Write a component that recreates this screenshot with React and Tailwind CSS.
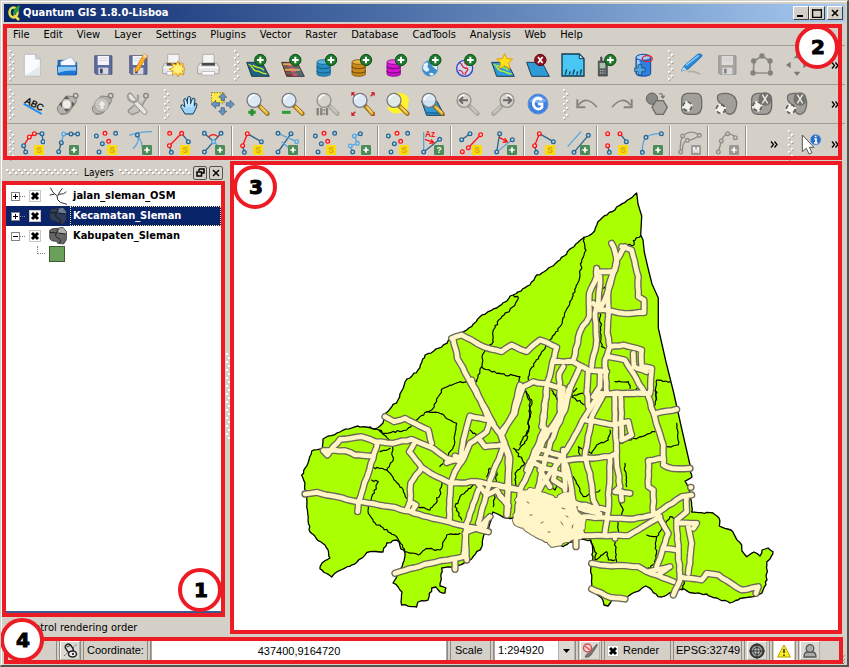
import React from "react";

const UI = "font-['DejaVu_Sans_Condensed','DejaVu_Sans',sans-serif]";

/* ---------- small shared pieces ---------- */

function Grip({ className = "w-[15px]" }) {
  return (
    <div className={`flex h-full shrink-0 items-center justify-end ${className}`}>
      <svg width="6" height="31" aria-hidden="true">
        {[0, 7, 14, 21, 28].map((y) => (
          <g key={y}>
            <rect x="0" y={y} width="2" height="2" fill="#fff" />
            <path d={`M2 ${y + 1}v1.5h-1`} stroke="#a5a199" fill="none" />
          </g>
        ))}
        {[3, 10, 17, 24].map((y) => (
          <g key={y}>
            <rect x="3" y={y + 1} width="2" height="2" fill="#fff" />
            <path d={`M5 ${y + 2}v1.5h-1`} stroke="#a5a199" fill="none" />
          </g>
        ))}
      </svg>
    </div>
  );
}

function DotRow({ width }) {
  const n = Math.floor(width / 6);
  return (
    <svg width={width} height="7" aria-hidden="true">
      {Array.from({ length: n }, (_, i) => (
        <g key={i}>
          <rect x={i * 6} y="0" width="2" height="2" fill="#fff" />
          <rect x={i * 6 + 1} y="2" width="2" height="1" fill="#a5a199" />
          <rect x={i * 6 + 3} y="3" width="2" height="2" fill="#fff" />
          <rect x={i * 6 + 4} y="5" width="2" height="1" fill="#a5a199" />
        </g>
      ))}
    </svg>
  );
}

function Tool({ label, h = 24, children }) {
  return (
    <button type="button" aria-label={label} className="flex w-[35px] shrink-0 justify-center">
      <svg width="24" height={h} viewBox={`0 0 72 ${h * 3}`} aria-hidden="true">
        {children}
      </svg>
    </button>
  );
}

function More({ className = "w-5" }) {
  return (
    <button type="button" aria-label="More tools" className={`shrink-0 text-center ${className}`}>
      <svg width="8" height="7" viewBox="0 0 8 7" className="inline" aria-hidden="true">
        <path d="M1 .5l2.5 3L1 6.500M4.500 .5l2.500 3-2.500 3" fill="none" stroke="#000" strokeWidth="1.300" />
      </svg>
    </button>
  );
}

const Sep = () => <div className="-mt-1 h-8 w-[3px] shrink-0 border-l border-[#96928a] shadow-[inset_1px_0_#fff]" />;

function Callout({ n, className }) {
  return (
    <div
      className={`pointer-events-none absolute z-20 flex size-11 items-center justify-center rounded-full border-4 border-[#ed1c24] bg-white pl-0.5 font-['DejaVu_Sans',sans-serif] text-xl font-bold text-black [-webkit-text-stroke:1px_#000] ${className}`}
    >
      {n}
    </div>
  );
}

function Frame({ className }) {
  return <div className={`pointer-events-none absolute z-10 border-4 border-[#ed1c24] ${className}`} />;
}

/* ---------- icon parts ---------- */

const Plus = ({ x = 43, y = 21 }) => (
  <g>
    <circle cx={x} cy={y} r="17" fill="#1d7a2b" stroke="#0f4f1a" strokeWidth="3" />
    <path d={`M${x - 10} ${y}h20M${x} ${y - 10}v20`} stroke="#fff" strokeWidth="6" />
  </g>
);

const Db = ({ c, d, l }) => (
  <g stroke={d} strokeWidth="2.500">
    <path d="M3 28v35c0 9 40 9 40 0V28z" fill={c} />
    <path d="M3 40c0 9 40 9 40 0M3 53c0 9 40 9 40 0" fill="none" strokeWidth="4" />
    <ellipse cx="23" cy="27" rx="20" ry="7" fill={l} />
  </g>
);

const Floppy = ({ c = "#5d6d9e", d = "#3c4468", l = "#f4f4fa" }) => (
  <g>
    <path d="M11 8h52v56H15l-4-4z" fill={c} stroke={d} strokeWidth="2" />
    <rect x="20" y="9" width="34" height="27" fill={l} />
    <path d="M24 16h26M24 23h26" stroke="#c8c8d0" strokeWidth="2" />
    <rect x="22" y="44" width="30" height="20" fill="#d8d8dc" />
    <rect x="27" y="47" width="8" height="14" fill={d} />
  </g>
);

const Printer = () => (
  <g>
    <path d="M20 4h34v30H20z" fill="#f4f4f4" stroke="#9a9a9a" strokeWidth="2" />
    <path d="M12 30h50l7 12v20H5V42z" fill="#e6e6e6" stroke="#8c8c8c" strokeWidth="2" />
    <path d="M7 44h60" stroke="#fff" strokeWidth="3" />
    <rect x="17" y="30" width="40" height="8" fill="#4a4a4a" />
    <rect x="18" y="56" width="38" height="10" fill="#fff" stroke="#aaa" strokeWidth="2" />
  </g>
);

const Lens = ({ gray, x = 24, y = 25, flip }) => {
  const g = (
    <g>
      <path d={`M${x + 16} ${y + 17}L64 65`} stroke={gray ? "#a3a19c" : "#8a6a1c"} strokeWidth="13" strokeLinecap="round" />
      <path d={`M${x + 20} ${y + 20}L63 64`} stroke={gray ? "#bfbcb6" : "#f0b93c"} strokeWidth="8" strokeLinecap="round" />
      <path d={`M${x + 23} ${y + 21}L63 61`} stroke={gray ? "#dad7d1" : "#ffe79a"} strokeWidth="3" />
      <circle cx={x} cy={y} r="21" fill={gray ? "#d6d3cc" : "#dce9f7"} fillOpacity={gray ? 1 : 0.92} stroke={gray ? "#93918c" : "#77797e"} strokeWidth="4" />
      <path d={`M${x - 14} ${y - 2}q2-13 16-14`} stroke="#fff" strokeWidth="5" fill="none" />
    </g>
  );
  return flip ? <g transform="translate(72 0) scale(-1 1)">{g}</g> : g;
};

const Sheet = ({ fill = "#2e9bd6", children }) => (
  <g>
    <path d="M2 28h46l22 42H17z" fill={fill} stroke="#1d3d4f" strokeWidth="3" />
    {children}
  </g>
);

const Star = ({ x, y, s = 1, c = "#ffe11f" }) => (
  <path
    transform={`translate(${x} ${y}) scale(${s})`}
    d="M0-24l7 15 17 1-12 12 4 18-16-10-16 10 4-18-12-12 17-1z"
    fill={c}
    stroke="#e0a000"
    strokeWidth="3"
  />
);

const Burst = () => (
  <path
    d="M51 24l5 13 11-6-3 12 9 5-9 5 4 13-12-6-5 11-6-11-12 6 4-12-12-6 12-5-5-13 13 6z"
    fill="#fff27a"
    stroke="#f09a00"
    strokeWidth="3"
  />
);

const B = "#2a6590";
const L = "#5aa6dc";
const R = "#ff1212";
const G = "#8f8d88";

const Dot = ({ p, c = B }) => (
  <circle cx={p[0]} cy={p[1]} r="5.500" fill={c === R ? "#ffe1dc" : c === G ? "#d4d0c8" : "#b8dcf2"} stroke={c} strokeWidth="4" />
);

function Badge({ k, gray }) {
  const fill = gray ? "#9a9893" : k === "S" ? "#fddc08" : "#4d8c57";
  return (
    <g>
      <rect x="39" y="45" width="30" height="30" rx="4" fill={fill} />
      {k === "+" ? (
        <path d="M46 60h16M54 52v16" stroke="#fff" strokeWidth="5" />
      ) : (
        <text x="54" y="69" textAnchor="middle" fontFamily="Liberation Sans, sans-serif" fontWeight="bold" fontSize="25" fill={k === "S" ? "#c9a227" : "#fff"}>
          {k}
        </text>
      )}
    </g>
  );
}

function Cad({ label, lines = [], dots = [], k, gray, children }) {
  return (
    <Tool label={label} h={26}>
      {lines.map(([d, c], i) => (
        <path key={i} d={d} stroke={c} strokeWidth="4" fill="none" />
      ))}
      {children}
      {dots.map(([x, y, c], i) => (
        <Dot key={i} p={[x, y]} c={c} />
      ))}
      <Badge k={k} gray={gray} />
    </Tool>
  );
}

const scatter = [[7, 18, B], [33, 10, R], [65, 10, B], [25, 41, B], [44, 34, R], [15, 66, B]];
const bend = {
  lines: [["M22 11L8 47", R], ["M22 11L64 35M8 47l5 20", B]],
  dots: [[22, 11, R], [8, 47, R], [64, 35, B], [13, 67, B]],
};

/* ---------- tool bars ---------- */

function FileToolbar() {
  return (
    <div className="flex h-[39px] items-center border-b border-[#a19d95]">
      <Grip className="w-[11px]" />
      <Tool label="New project">
        <path d="M10 4h34l14 14v51H10z" fill="#fafbfd" stroke="#a7adb5" strokeWidth="2" />
        <path d="M44 4v14h14z" fill="#d5dae2" stroke="#a7adb5" strokeWidth="2" />
        <path d="M14 66h42V40z" fill="#e4e9f0" />
      </Tool>
      <Tool label="Open project">
        <path d="M6 22h20l6 6h30v36H6z" fill="#1e6fc4" stroke="#0f4f9a" strokeWidth="2" />
        <path d="M14 26L44 12l14 16v14H14z" fill="#f6f9fd" stroke="#8fa5bd" strokeWidth="2" />
        <path d="M4 38h58l-2 28H6z" fill="#1e78d4" stroke="#0f4f9a" strokeWidth="2" />
        <path d="M6 41h54v12q-26-2-54 6z" fill="#8cc6f6" />
      </Tool>
      <Tool label="Save project"><Floppy /></Tool>
      <Tool label="Save project as">
        <Floppy />
        <path d="M54 3l10 5-27 45-10 5 1-12z" fill="#ffae22" stroke="#b86e00" strokeWidth="2" />
        <path d="M54 3l10 5-4 8-10-6z" fill="#f6d7b0" />
      </Tool>
      <Tool label="New print composer"><Printer /><Burst /></Tool>
      <Tool label="Composer manager"><Printer /></Tool>
      <Grip />
      <Tool label="Add vector layer">
        <Sheet fill="#1c6480"><path d="M8 34c12 2 10 20 24 20s14 10 30 8M20 36c12 12 26 4 34 16" stroke="#d5e02c" strokeWidth="4" fill="none" /></Sheet>
        <Plus />
      </Tool>
      <Tool label="Add raster layer">
        <path d="M2 28h46l22 42H17z" fill="#3f6f86" />
        <path d="M2 28h14l21 42H17z" fill="#7d4038" />
        <path d="M16 28h14l22 42H37z" fill="#d85078" />
        <path d="M4 34h46M11 50h48" stroke="#d8a95c" strokeWidth="6" />
        <path d="M8 42h46M14 60h50" stroke="#6d6458" strokeWidth="4" />
        <path d="M2 28h46l22 42H17z" fill="none" stroke="#4a3530" strokeWidth="3" />
        <Plus />
      </Tool>
      <Tool label="Add PostGIS layer"><Db c="#2b8cc4" d="#17648f" l="#5cb4e2" /><Plus x={45} /></Tool>
      <Tool label="Add SpatiaLite layer"><Db c="#c98a1a" d="#7d5208" l="#e8b14a" /><Plus x={45} /></Tool>
      <Tool label="Add MSSQL layer"><Db c="#d713d0" d="#7a0a80" l="#f04be8" /><Plus x={45} /></Tool>
      <Tool label="Add WMS layer">
        <circle cx="27" cy="46" r="24" fill="#3f8dc8" stroke="#7faed2" strokeWidth="2" />
        <path d="M8 34c10-10 16-4 12 4s8 6 4 14-14 4-18-6zM32 28c8 0 16 8 17 18s-8 0-12-4-8-8-5-14zM24 62c6-6 14-2 14 2s-8 6-14-2z" fill="#e6f3fb" />
        <Plus />
      </Tool>
      <Tool label="Add WFS layer">
        <circle cx="26" cy="46" r="24" fill="#cfd7ee" stroke="#2b45c8" strokeWidth="4" />
        <path d="M12 30c8 4 4 10 12 14s14-2 10 8-8 4-6 14M28 26c-6 8 8 6 4 12M8 52c10 0 12 4 14 12" fill="none" stroke="#e02030" strokeWidth="4" />
        <Plus />
      </Tool>
      <Tool label="New shapefile layer">
        <Sheet><path d="M8 34c12 2 10 20 24 20s14 10 30 8M18 36c12 12 26 4 34 16" stroke="#b9ee3c" strokeWidth="4" fill="none" /></Sheet>
        <Star x={41} y={26} />
      </Tool>
      <Tool label="Remove layer">
        <Sheet />
        <circle cx="43" cy="21" r="17" fill="#8c1420" stroke="#5c0a12" strokeWidth="3" />
        <path d="M36 12l14 18M50 12L36 30" stroke="#fff" strokeWidth="5" />
      </Tool>
      <Tool label="Create GPX layer">
        <path d="M3 3h52l14 14v52H3z" fill="#48c6f4" stroke="#123a50" strokeWidth="4" />
        <path d="M55 3v14h14z" fill="#c5eefb" stroke="#123a50" strokeWidth="3" />
        <path d="M13 65l4-16M25 65l3-10M36 65l4-16M47 65l3-10M58 65l3-16" stroke="#123a50" strokeWidth="4" />
      </Tool>
      <Tool label="GPS tools">
        <path d="M7 24h7V12h4v12h16v45H7z" fill="#565b5e" stroke="#33383b" strokeWidth="2" />
        <rect x="11" y="30" width="17" height="16" fill="#a9c2a8" />
        <path d="M12 53h16M12 60h16" stroke="#ccc" strokeWidth="3" strokeDasharray="4 3" />
        <Plus />
      </Tool>
      <Tool label="Database manager">
        <path d="M15 14v48c0 10 44 10 44 0V14z" fill="#2f7fe0" stroke="#12459a" strokeWidth="3" />
        <path d="M22 20v44" stroke="#a5d2ff" strokeWidth="8" />
        <ellipse cx="37" cy="13" rx="22" ry="9" fill="#9fd0ff" stroke="#12459a" strokeWidth="3" />
        <ellipse cx="49" cy="17" rx="15" ry="9" fill="none" stroke="#f01828" strokeWidth="4" />
        <path d="M21 35h11v10h10v11H32v10H21V56H11V45h10z" fill="#4ea6dc" stroke="#103c66" strokeWidth="2" />
      </Tool>
      <Grip className="w-[14px]" />
      <Tool label="Toggle editing">
        <path d="M22 56q22-4 38 8" stroke="#b2aea6" strokeWidth="5" fill="none" />
        <path d="M4 54l10-17L54 3q10-3 13 6L25 48z" fill="#2588dc" stroke="#145c9e" strokeWidth="2" />
        <path d="M18 37L56 7" stroke="#85c6f8" strokeWidth="5" />
        <path d="M4 54l8-12 7 8z" fill="#c9dff0" />
      </Tool>
      <Tool label="Save edits"><Floppy c="#a8a6a1" d="#85837e" l="#dddbd6" /></Tool>
      <Tool label="Add feature">
        <path d="M36 9L59 24l2 36H10l2-36z" fill="none" stroke={G} strokeWidth="5" />
        {[[36, 9], [11, 24], [60, 24], [9, 60], [61, 60]].map(([x, y]) => (
          <circle key={x} cx={x} cy={y} r="8" fill="#85837e" />
        ))}
      </Tool>
      <Tool label="Move feature">
        <path d="M36 3l10 13H26zM36 69l10-13H26zM3 36l14-10v20zM69 36L55 26v20z" fill="#7c7a76" />
      </Tool>
      <div className="flex-1" />
      <More />
    </div>
  );
}

const Tag = () => (
  <g>
    <path d="M4 46L30 12l26 2 6 12-24 34-20 8q-14-4-14-22z" fill="#b5b3ae" stroke="#85837e" strokeWidth="3" />
    <circle cx="59" cy="11" r="7" fill="none" stroke="#85837e" strokeWidth="4" />
    <path d="M14 64q14 6 24-4l22-30" stroke="#92908b" strokeWidth="4" fill="none" />
  </g>
);

const Ring = ({ x, y }) => (
  <g>
    <circle cx={x} cy={y} r="11" fill="#f4f2ec" />
    <circle cx={x} cy={y} r="13" fill="none" stroke="#63615d" strokeWidth="5" strokeDasharray="13 7" />
    <circle cx={x} cy={y} r="13" fill="none" stroke="#f4f2ec" strokeWidth="6" strokeDasharray="7 13" strokeDashoffset="-13" />
  </g>
);
const blob = (
  <path d="M22 4h28q15 2 15 20v22q-2 18-18 21H24Q6 66 5 50V22Q6 6 22 4z" fill="#a19f9a" stroke="#6d6b67" strokeWidth="4" />
);
const bean = (
  <path d="M8 12Q12 3 32 4q33 2 33 32-2 28-20 31-14-1-15-17 0-10-14-16Q5 24 8 12z" fill="#a19f9a" stroke="#6d6b67" strokeWidth="4" />
);
const erase = (
  <g>
    <circle cx="45" cy="21" r="20" fill="#74726e" />
    <path d="M37 8l16 26M53 8L37 34" stroke="#f0eee9" strokeWidth="4" />
  </g>
);

function NavToolbar() {
  return (
    <div className="flex h-[39px] items-center border-b border-[#a19d95]">
      <Grip className="w-[11px]" />
      <Tool label="Labeling">
        <text x="10" y="32" transform="rotate(27 10 32)" fontFamily="Liberation Sans, sans-serif" fontSize="28" fill="#000" stroke="#000">ABC</text>
        <path d="M8 35l54 31" stroke="#1c8af4" strokeWidth="6" />
      </Tool>
      <Tool label="Move label">
        <Tag />
        <path d="M32 12l9 9H23zM32 60l9-9H23zM9 37l9-9v18zM56 37l-9-9v18z" fill="#5f5d59" />
        <circle cx="32" cy="37" r="12" fill="#efede8" />
      </Tool>
      <Tool label="Rotate label">
        <Tag />
        <circle cx="32" cy="38" r="21" fill="#c9c7c1" stroke="#a3a19c" strokeWidth="3" />
        <path d="M33 24l14 16h-8v12H27V40h-8z" fill="#efede8" stroke="#b0aea9" strokeWidth="2" />
      </Tool>
      <Tool label="Change label">
        <circle cx="60" cy="11" r="7" fill="none" stroke="#85837e" strokeWidth="4" />
        <path d="M60 20L38 60l-20 8q-10-4-12-12l18-16" fill="#c4c2bc" stroke="#92908b" strokeWidth="4" />
        <path d="M12 10l18 22 26 28" stroke="#92908b" strokeWidth="16" strokeLinecap="round" />
        <path d="M12 12l18 20 26 28" stroke="#e8e6e0" strokeWidth="11" strokeLinecap="round" />
        <path d="M5 10q0 20 20 20 16-4 10-22" stroke="#a3a19c" strokeWidth="7" fill="none" />
      </Tool>
      <Grip />
      <Tool label="Pan map">
        <path d="M27 66L15 46q-2-9 5-8l7 7-4-22q4-8 9 0l2 12 1-19q5-6 9 0v19l5-15q7-4 8 2l-2 20 3-7q5-3 5 3-2 14-12 28z" fill="#9bd3f6" stroke="#163c58" strokeWidth="3" />
        <path d="M29 27l3 20M39 20v24M50 26l-3 20" stroke="#dff3ff" strokeWidth="4" />
      </Tool>
      <Tool label="Pan to selection">
        <rect x="1" y="2" width="38" height="31" fill="#ffe94a" stroke="#77681a" strokeWidth="3" strokeDasharray="4 4" />
        <path d="M35 3l12 13h-7v10H30V16h-7zM35 70l12-13h-7V47H30v10h-7zM1 37l13-12v7h11v10H14v7zM70 37L57 25v7H46v10h11v7z" fill="#6b94bd" stroke="#34587c" strokeWidth="2" />
      </Tool>
      <Tool label="Zoom in"><Lens /><path d="M7 61h22M18 51v20" stroke="#2a8f2f" strokeWidth="9" /></Tool>
      <Tool label="Zoom out"><Lens /><path d="M3 61h26" stroke="#2a9f35" strokeWidth="9" /></Tool>
      <Tool label="Zoom to native resolution"><Lens gray /><path d="M5 48v22M16 48v22M33 48v22" stroke="#83817c" strokeWidth="7" /><path d="M25 52v5m0 6v5" stroke="#83817c" strokeWidth="5" /></Tool>
      <Tool label="Zoom full">
        <path d="M3 3l10 10M69 3L59 13M3 69l10-10M69 69L59 59" stroke="#d01822" strokeWidth="4" />
        <path d="M1 1h12L1 13zM71 1H59l12 12zM1 71h12L1 59zM71 71H59l12-12z" fill="#d01822" />
        <Lens x={27} />
      </Tool>
      <Tool label="Zoom to selection"><path d="M10 16Q30-6 60 8q14 10 6 28 2 20-20 26-26 8-40-10z" fill="#fff22e" /><Lens /></Tool>
      <Tool label="Zoom to layer"><Sheet><path d="M12 62l50 2" stroke="#1d6fa8" strokeWidth="5" /></Sheet><Lens /></Tool>
      <Tool label="Zoom last"><Lens gray /><path d="M12 25h24M21 15L11 25l10 10" stroke="#6b6965" strokeWidth="6" fill="none" /></Tool>
      <Tool label="Zoom next"><Lens gray flip /><path d="M36 25h24M51 15l10 10-10 10" stroke="#6b6965" strokeWidth="6" fill="none" /></Tool>
      <Tool label="Refresh">
        <circle cx="36" cy="36" r="30" fill="#3f80e0" stroke="#5f8fd8" strokeWidth="3" />
        <path d="M10 28q26-34 52 0-26 12-52 0z" fill="#78adf2" />
        <path d="M48 24q-12-10-22-1-9 12 1 24 11 9 21-1V36H36" stroke="#fff" strokeWidth="8" fill="none" />
      </Tool>
      <Grip className="w-[14px]" />
      <Tool label="Undo"><path d="M10 40q24-32 56 6" fill="none" stroke="#85837e" strokeWidth="5" /><path d="M7 22v24h24" fill="none" stroke="#85837e" strokeWidth="6" /></Tool>
      <Tool label="Redo"><path d="M62 40Q38 8 6 46" fill="none" stroke="#85837e" strokeWidth="5" /><path d="M65 22v24H41" fill="none" stroke="#85837e" strokeWidth="6" /></Tool>
      <Tool label="Simplify feature">
        <circle cx="21" cy="20" r="17" fill="#8b8985" stroke="#63615d" strokeWidth="3" />
        <path d="M33 26h22l12 20-12 21H33L21 46z" fill="#a9a7a2" stroke="#6d6b67" strokeWidth="4" />
        <path d="M42 6q10-4 12 8m-6-2l6 6 5-7" fill="none" stroke="#7c7a76" strokeWidth="4" />
      </Tool>
      <Tool label="Add ring">{blob}<Ring x={22} y={43} /></Tool>
      <Tool label="Add part">{bean}<Ring x={17} y={51} /></Tool>
      <Tool label="Delete ring">{blob}<Ring x={22} y={43} />{erase}</Tool>
      <Tool label="Delete part">{bean}<Ring x={17} y={51} />{erase}</Tool>
      <div className="flex-1" />
      <More />
    </div>
  );
}

function CadToolbar() {
  return (
    <div className="flex h-9 items-start pt-1.5">
      <div className="-mt-0.5 h-[34px]"><Grip className="w-[11px]" /></div>
      <Cad label="Select arc" k="S" lines={[["M8 47L25 21L40 11", R], ["M14 66L8 47M40 11H63L66 35", B]]} dots={[[8, 47, B], [14, 66, B], [25, 21, R], [40, 11, R], [63, 11, B], [66, 35, B]]} />
      <Cad label="Add arc" k="+" lines={[["M8 65L16 38", B], ["M16 38L23 12", L], ["M23 12H65", B]]} dots={[[8, 65, B], [16, 38, B], [23, 12, L], [45, 12, B], [65, 12, B]]} />
      <Sep />
      <Cad label="Select points" k="S" dots={scatter} />
      <Cad label="Tangent point" k="+" lines={[["M1 16Q25 6 69 5M12 56Q34 36 25 16Q40 34 40 56", L]]} dots={[[25, 15, B]]} />
      <Sep />
      <Cad label="Select three points" k="S" lines={[["M7 47L44 10", R], ["M44 10L64 35M7 47l6 20", B]]} dots={[[8, 10, R], [44, 10, R], [7, 47, R], [64, 35, B], [13, 67, B]]} />
      <Cad label="Bisect angle" k="+" lines={[["M7 10L35 35L57 10M35 35L7 66", B], ["M35 35L57 56", L], ["M20 20Q34 8 48 20", R]]} dots={[[7, 10, B], [57, 10, B], [35, 35, L], [7, 66, B]]} />
      <Sep />
      <Cad label="Select two segments" k="S" {...bend} />
      <Cad label="Intersect segments" k="+" lines={[["M48 11L9 66", B], ["M9 10L65 35M20 35l28 24", L]]} dots={[[9, 10, B], [48, 11, B], [65, 35, L], [9, 66, B]]} />
      <Sep />
      <Cad label="Select vertices" k="S" dots={scatter} />
      <Cad label="Add polyline" k="+" lines={[["M37 11L19 18L28 40L7 48L14 66", L]]} dots={[[37, 11, B], [19, 18, L], [28, 40, L], [7, 48, L], [14, 66, B]]} />
      <Sep />
      <Cad label="Select azimuth points" k="S" dots={scatter} />
      <Cad label="Azimuth" k="?" lines={[["M8 66V6", L], ["M8 66L56 28", B], ["M12 28L38 38M30 28l8 10-13 2", R]]} dots={[[56, 28, B], [8, 66, B]]}>
        <text x="12" y="22" fontFamily="Liberation Sans, sans-serif" fontWeight="bold" fontSize="25" fill={R}>Az</text>
      </Cad>
      <Sep />
      <Cad label="Select segment" k="S" lines={[["M8 29L33 11", B], ["M28 53L65 14", R]]} dots={[[33, 11, B], [8, 29, B], [65, 14, R], [28, 53, R], [10, 65, R]]} />
      <Cad label="Rotate segment" k="+" lines={[["M17 11L8 66", B], ["M8 66L55 29", L], ["M16 22L40 36M32 24l8 12-14 1", R]]} dots={[[17, 11, B], [55, 29, B], [8, 66, B]]} />
      <Sep />
      <Cad label="Select parallel" k="S" {...bend} />
      <Cad label="Add parallel" k="+" lines={[["M2 50L42 5", L], ["M21 67L64 16", B]]} dots={[[64, 16, B], [21, 67, B]]} />
      <Sep />
      <Cad label="Select line ends" k="S" lines={[["M45 11L64 35M8 47l5 20", B]]} dots={[[8, 11, R], [45, 11, R], [64, 35, B], [8, 47, R], [13, 67, B]]} />
      <Cad label="Add curve" k="+" lines={[["M7 67Q6 36 18 22Q34 10 64 11", L]]} dots={[[7, 67, B], [18, 22, B], [64, 11, B]]} />
      <Sep />
      <Cad label="Modify curve" k="M" gray lines={[["M8 66Q4 36 14 18Q40-4 64 16M14 60Q12 36 28 31Q48 30 64 16", G]]} dots={[[8, 66, G], [14, 18, G], [28, 31, G], [64, 16, G]]} />
      <Sep />
      <Cad label="Append curve" k="+" gray lines={[["M7 66L16 33Q22 16 35 11Q50 12 58 23", G]]} dots={[[7, 66, G], [16, 33, G], [35, 11, G], [58, 23, G]]} />
      <Sep />
      <div className="flex h-[27px] flex-1 items-center justify-end"><More className="w-4" /></div>
      <div className="-mt-0.5 h-[34px]"><Grip className="w-3" /></div>
      <Tool label="Identify features" h={26}>
        <path d="M7 15v50l12-10 8 17 9-4-8-16h14z" fill="#fff" stroke="#55534f" strokeWidth="3" />
        <circle cx="47" cy="29" r="16" fill="#2d6fc4" stroke="#8fb6e4" strokeWidth="2" />
        <path d="M47 17v5M43 27h5v11m-6 1h11" stroke="#fff" strokeWidth="5" fill="none" />
      </Tool>
      <div className="flex h-[27px] w-4 shrink-0 items-center"><More className="w-3" /></div>
    </div>
  );
}

/* ---------- layer panel ---------- */

const Tick = ({ className = "" }) => (
  <svg viewBox="0 0 12 12" className={`pointer-events-none col-start-1 row-start-1 size-3 ${className}`} aria-hidden="true">
    <path d="M3 3l6 6M9 3L3 9" stroke="#000" strokeWidth="3" />
  </svg>
);

function Check({ id, label }) {
  return (
    <span className="grid size-3 shrink-0 place-items-center">
      <input id={id} type="checkbox" defaultChecked aria-label={label} className="col-start-1 row-start-1 size-3 appearance-none border border-[#c9c6bf] bg-white" />
      <Tick />
    </span>
  );
}

const PolyIcon = ({ dark }) => (
  <svg width="18" height="18" viewBox="0 0 54 54" aria-hidden="true">
    <path d="M2 10Q8 3 26 4l16-3 11 14-1 24-8 12-18-2-4-6Q2 44 2 30z" fill={dark ? "#303c58" : "#666"} stroke={dark ? "#1c2436" : "#222"} strokeWidth="2" />
    <path d="M28 5l14-3 10 14-6 4-18-3z" fill={dark ? "#6c7794" : "#b0b0b0"} />
    <path d="M2 16l20 2 6-12M28 18l20 3M22 18q-6 12 6 16t2 16" fill="none" stroke={dark ? "#141a28" : "#222"} strokeWidth="3" />
  </svg>
);

const RoadIcon = () => (
  <svg width="18" height="18" viewBox="0 0 54 54" fill="none" stroke="#333" strokeWidth="3" aria-hidden="true">
    <path d="M4 2l8 14 12 10 2 12 8 8 20 6M2 24l14-2M26 28l4-10 10-14M30 22l14-2 8-6" />
  </svg>
);

function Layer({ name, open, selected, icon }) {
  return (
    <li className={`flex h-5 items-center pl-[5px] ${selected ? "bg-[#0a246a] text-white" : ""}`}>
      <button type="button" aria-label={open ? "Collapse" : "Expand"} className="flex size-[9px] items-center justify-center border border-[#848284] bg-white">
        <svg width="5" height="5" aria-hidden="true">
          <path d={open ? "M0 2.500h5" : "M0 2.500h5M2.500 0v5"} stroke="#000" />
        </svg>
      </button>
      <span className="mr-1 w-[5px] border-t border-dotted border-[#848284]" />
      <Check label={name} />
      <span className="ml-2">{icon}</span>
      <span className={`ml-[3px] flex h-full flex-1 items-center border border-dotted pl-0.5 text-[11px] font-bold ${selected ? "border-[#f5db95]" : "border-transparent"}`}>
        {name}
      </span>
    </li>
  );
}

function LayerPanel() {
  return (
    <aside className="flex w-[221px] shrink-0 flex-col">
      <div className="flex h-[21px] items-center gap-1.5 pt-1 pl-0.5">
        <DotRow width={72} />
        <h2 className="w-[29px] text-[10px]">Layers</h2>
        <DotRow width={72} />
        <div className="-ml-1 flex gap-0.5">
          <button type="button" aria-label="Float panel" className="flex size-[14px] items-center justify-center rounded-xs border border-[#55534f]">
            <svg width="9" height="9" fill="none" stroke="#000" aria-hidden="true"><path d="M3 1h5v4H6M3 3V1M1 4h4.500v4H1z" strokeWidth="1.500" /></svg>
          </button>
          <button type="button" aria-label="Close panel" className="flex size-[14px] items-center justify-center rounded-xs border border-[#55534f]">
            <svg width="8" height="8" aria-hidden="true"><path d="M1 1l6 6M7 1L1 7" stroke="#000" strokeWidth="1.500" /></svg>
          </button>
        </div>
      </div>
      <div className="relative flex-1 bg-white pt-[5px] pr-1 pl-0.5">
        <ul>
          <Layer name="jalan_sleman_OSM" icon={<RoadIcon />} />
          <Layer name="Kecamatan_Sleman" selected icon={<PolyIcon dark />} />
          <Layer name="Kabupaten_Sleman" open icon={<PolyIcon />} />
          <li className="flex h-4 pl-[31px]">
            <span className="mr-1 h-2 w-2 border-b border-l border-dotted border-[#848284]" />
            <span className="size-4 border border-[#3c5a32] bg-[#6aa058]" />
          </li>
        </ul>
        <div className="absolute inset-x-0 bottom-1 h-0.5 bg-[#3a5a94]" />
        <Frame className="inset-y-0 right-0 -left-0.5" />
        <Callout n="1" className="right-[3px] bottom-[5px]" />
      </div>
      <div className="flex h-[19px] items-center gap-1 pt-1 pl-px">
        <Check id="order" label="Control rendering order" />
        <label htmlFor="order" className="text-[11px] whitespace-nowrap">Control rendering order</label>
      </div>
    </aside>
  );
}

/* ---------- map ---------- */

let seed = 7;
const rnd = () => {
  seed = (seed * 16807) % 2147483647;
  return seed / 2147483647 - 0.5;
};

// Turns "x,y x,y ..." into a path whose segments wander a little, like surveyed borders.
function rough(str, step, amp) {
  const pts = str.trim().split(/\s+/).map((p) => p.split(",").map(Number));
  let d = `M${pts[0]}`;
  for (let i = 1; i < pts.length; i++) {
    const [ax, ay] = pts[i - 1];
    const [bx, by] = pts[i];
    const n = Math.max(1, Math.round(Math.hypot(bx - ax, by - ay) / step));
    for (let j = 1; j < n; j++) {
      d += `L${(ax + ((bx - ax) * j) / n + rnd() * amp).toFixed(1)},${(ay + ((by - ay) * j) / n + rnd() * amp).toFixed(1)}`;
    }
    d += `L${bx},${by}`;
  }
  return d;
}

const eastEdge = "636.7,193 638,204 641.7,216 640.7,235 643,240 644.3,252 648,268 652,284 658.3,298 658.3,328 666,362 673.5,392 682,430 690.7,468";
const coast =
  "690.7,468 692,477 685,481 689,490 691,500 691.700,512 713,513 719,518 719.300,526 733,532 737,540 741.700,545 742,551 746.700,556.700 754,552 760,556 762,550 768,548 773,551.700 770,559 766.700,562 767,580 762,593 750,597 738,600 730,603 716.700,598 706.700,594 693,593 681.700,589 675,590 666.700,595 658,596.700 651.700,590 645.700,586 640,590 633,593 625,598 611.700,600 608,606 604,605 601.700,598 591.700,590 591,567 593,557 590.700,540 575,540 563,546.700 550,541.700 536.700,533 516.700,525 513,518 506,518 493,512 490,523 483,538 481.700,547 473,556.700 466.700,562 455,567 441.700,568 441,577 440,586 446,588 445,593 440,592 436,587 431.700,588 428,600 418,602 416.700,607 401.700,605 402,592 393,583 403,563 405,553 400,546 396.700,540 386.700,543 383,552 370,551.700 351.700,565 336.700,572 331.700,577 320,569 322,563 330,558 325,545 316,538 310,532 308,520 306.700,507 305,483 301.700,475 308,463 311.700,451 322.700,448 323,439 340,432 358,426 375,429 383,423 384.700,414 398,400 405,382 418,370 425,355 441.700,347 451.700,338 466.700,330 480,316.700 496.700,308 513,295 530,285 536.700,275 546.700,270 560,260 571.700,248 585,237 593,232.700 600,220 636.700,193";

const outline = rough(eastEdge, 40, 0) + rough(coast, 3, 1.8).replace(/^M/, "L") + "Z";

// Each sheet keeps its own 1:3 drawing grid; "at" is the sheet's corner on the map.
const sheets = [
  {
    at: "translate(290 380) scale(.33333)",
    borders: [
      "410,95 450,100 500,130 490,200 450,260", "240,140 285,160 350,150 380,120 410,95",
      "270,150 305,190 310,240 290,270 250,262", "290,270 340,330 350,355",
      "245,300 265,305 240,370 235,400 250,425 320,470 345,515 385,525 410,505 450,510 470,465 510,460",
      "375,380 420,390 450,345 455,300 395,265", "550,315 510,350 495,380 515,420",
      "590,290 600,265 620,275 610,380", "270,215 300,205", "540,150 560,165 570,190",
    ],
    roads: [
      "285,110 312,125 345,115 415,150 425,190", "100,212 112,225 150,178 215,170 255,185 310,190 365,178 430,205 470,235 515,245",
      "100,212 165,212 195,225 240,228", "45,342 80,337 200,365 315,382 400,408 520,437 595,455", "262,190 235,280 205,365 203,395",
      "375,185 358,215 395,262 362,310 360,365 350,390", "360,365 378,375 365,395", "395,262 440,290 482,310 478,420",
      "482,310 560,305 650,320 690,330", "482,310 495,275 515,245 540,190 590,155 600,120 540,108 520,180 512,245", "495,228 515,235 470,248",
      "545,0 595,120 635,165 660,235 650,405", "690,15 670,100 635,165 645,190 600,300 565,430", "565,330 530,430 520,530 420,550 315,580",
      "495,545 495,568", "570,180 585,200 640,195", "560,305 590,345 620,330 655,380", "600,410 570,440 530,455", "525,460 530,540", "590,420 585,440",
    ],
  },
  {
    at: "translate(370 270) scale(.33333)",
    borders: [
      "430,75 445,85 435,105 395,140 370,180 370,215 340,250 335,290 320,335 270,335 220,355 185,420 170,425",
      "335,290 380,310 450,320 450,345 470,370 480,400 475,480 460,500 450,525", "600,95 570,170 540,210 480,300 475,330", "545,360 560,385 575,375",
    ],
    roads: [
      "245,205 275,195 345,232 395,245 425,225 470,245 510,210 560,232 545,290 530,350 520,470", "250,210 262,265 370,460",
      "435,410 460,350 490,335 540,345 580,355 570,430 545,480", "580,290 568,310 568,350", "600,350 585,420 560,470",
    ],
  },
  {
    at: "translate(500 180) scale(.33333)",
    borders: [
      "250,172 258,210 245,240 240,290 210,365", "422,168 400,182 402,195 375,195",
      "325,305 310,325", "300,400 305,500 315,505", "345,605 385,605 390,625", "465,700 470,600 510,605", "230,625 215,650 250,640", "410,625 400,640",
    ],
    roads: [
      "335,190 345,215 350,250 335,290 320,345 300,390", "375,200 350,240 345,270", "365,200 395,210 415,290 415,350 432,360 432,398 370,400 300,388 280,370",
      "290,265 290,290 268,340 268,410 240,455 220,540", "335,275 290,275", "300,290 295,370 285,400 290,480 275,560", "350,250 325,330 325,410 322,460 330,500 315,540 320,640",
      "330,500 370,495 425,510 425,560 455,565 450,640", "325,530 375,540 435,640", "400,520 402,560 440,575", "160,545 220,545 265,570 320,575", "265,570 260,640",
      "240,560 200,650", "300,575 300,620 280,650", "340,640 450,640",
    ],
  },
  {
    at: "translate(500 390) scale(.33333)",
    borders: [
      "75,0 95,30 80,150 55,180 40,175 75,220 45,250 50,290", "530,100 535,165 500,170", "465,125 420,140 360,160", "330,120 325,150 290,165 275,190 235,170 240,195",
      "220,260 250,320 300,300", "375,220 380,290", "360,340 370,360 350,390 355,420 345,450 350,515", "440,435 470,440 510,380 525,390", "470,440 465,520 435,545",
      "285,510 320,485 325,510 345,510", "545,600 555,570", "465,0 470,30", "160,10 175,30", "215,20 255,45", "272,450 290,490 285,510", "135,280 165,300 170,280",
    ],
    roads: [
      "65,0 45,70 0,130", "140,0 125,110 145,125 190,60 205,0", "180,0 180,60", "145,125 100,215 60,300 50,395", "130,125 80,240", "170,110 140,190 110,310",
      "300,10 255,80 200,180 110,310", "262,10 265,50", "255,90 345,105 385,95 395,135 365,150", "345,10 345,100 350,190 330,200 325,360 315,430", "362,20 365,150", "300,10 435,10",
      "310,15 275,80 255,200 270,250 280,330 295,360", "445,20 490,165 490,225 515,235 570,235", "470,70 530,58", "490,205 445,212 445,290 460,300 460,370",
      "205,210 330,200", "110,175 190,200 205,250", "90,215 200,260", "190,180 195,300", "100,200 170,215 160,270 190,290", "120,240 150,290", "200,230 215,300",
      "350,180 350,215 360,290 345,305 390,310", "365,305 365,330", "0,290 60,300", "225,340 320,360", "240,355 300,372", "250,380 400,387 460,375 545,320 575,315", "572,292 573,292",
      "560,320 560,365 530,390 535,480 540,570 520,615", "245,437 385,437 480,380", "470,370 505,430 470,530", "495,475 530,480", "530,400 590,400 580,415",
      "565,410 575,460 565,550", "275,520 300,525 415,530 440,545 520,575", "445,545 510,530 480,550", "540,560 605,570 620,550 655,555 725,600 775,590 768,610",
      "275,597 330,622 375,627", "225,400 228,470", "215,300 220,345 245,430", "0,320 25,345", "0,130 25,200 22,375", "345,437 345,445",
    ],
  },
];

const city = rough("545,495 530,490 520,494 516,523 530,531 536,534 546,540 556,544 568,540 582,536 582,518 574,512 571,492 556,500 545,495", 3, 4);

const roadPaths = sheets.map((s) => ({ at: s.at, d: s.roads.map((r) => rough(r, 16, 3)).join("") }));
const borderPaths = sheets.map((s) => ({ at: s.at, d: s.borders.map((r) => rough(r, 7, 6)).join("") }));

function MapCanvas() {
  return (
    <main className="relative mt-px mr-[3px] mb-0.5 min-w-0 flex-1 bg-white p-1">
      <svg viewBox="234 165 604 465" className="block h-full w-full" role="img" aria-label="Map of Sleman" strokeLinejoin="round" strokeLinecap="round" fill="none">
        <path d={outline} fill="#aaff00" stroke="#000" strokeWidth="1.300" />
        {borderPaths.map((p) => (
          <path key={p.at} d={p.d} transform={p.at} stroke="#000" strokeWidth="3.500" />
        ))}
        <path d={city} stroke="#6b6858" strokeWidth="6" />
        {roadPaths.map((p) => (
          <path key={p.at} d={p.d} transform={p.at} stroke="#6b6858" strokeWidth="22" />
        ))}
        <path d={city} fill="#fff5c6" stroke="#fff5c6" strokeWidth="4" />
        {roadPaths.map((p) => (
          <path key={p.at} d={p.d} transform={p.at} stroke="#fff5c6" strokeWidth="14" />
        ))}
        <path d="M527 502l2 1M530 515h2M541 523l2-1M562 508l3 1M561 522l2 3M548 532h2M572 528l1-3M566 516l2 1" stroke="#6b6858" />
      </svg>
      <Frame className="inset-0" />
      <Callout n="3" className="top-1 left-[3px]" />
    </main>
  );
}

/* ---------- status bar ---------- */

const Rule = () => <span className="h-full w-1 shrink-0 border-x border-[#8d8a83]" />;
const statusButton = "flex h-[19px] w-5 shrink-0 items-center justify-center border border-[#b3afa7] border-t-white border-l-white bg-[#dcd9d2]";

function StatusBar() {
  return (
    <footer className="relative mt-px mb-px flex h-[27px] shrink-0 items-center pt-0.5 pr-6 pl-[52px] pb-0.5 font-['Liberation_Sans',Arial,sans-serif] text-[11px] whitespace-nowrap">
      <Rule />
      <button type="button" aria-label="Toggle extents" className={statusButton}>
        <svg width="15" height="15" viewBox="0 0 15 15" aria-hidden="true">
          <path d="M1 13L14 1" stroke="#666" strokeDasharray="2 1" />
          <rect x="3" y="1" width="6" height="9" rx="3" transform="rotate(-35 6 5)" fill="#ddd" stroke="#222" strokeWidth="1.500" />
          <path d="M4 4l4-2" stroke="#222" />
          <ellipse cx="9.500" cy="11" rx="4" ry="3" fill="#eee" stroke="#222" strokeWidth="1.500" />
          <circle cx="10" cy="11" r="1" />
        </svg>
      </button>
      <Rule />
      <label htmlFor="coord" className="w-[63px] shrink-0 pl-[3px]">Coordinate:</label>
      <Rule />
      <input id="coord" defaultValue="437400,9164720" className="h-[22px] w-0 min-w-0 flex-1 border border-[#aaa69e] bg-white text-center" />
      <Rule />
      <label htmlFor="scale" className="w-[39px] shrink-0 pl-1">Scale</label>
      <Rule />
      <span className="relative h-[22px] w-[81px] shrink-0">
        <select id="scale" className="h-full w-full appearance-none border border-[#aaa69e] bg-white pl-[3px]">
          <option>1:294920</option>
        </select>
        <span className="pointer-events-none absolute inset-y-0 right-0 flex w-[17px] items-center justify-center border border-[#b3afa7] border-t-white bg-[#dcd9d2]">
          <svg width="7" height="4" aria-hidden="true"><path d="M0 0h7L3.500 4z" /></svg>
        </span>
      </span>
      <Rule />
      <button type="button" aria-label="Stop rendering" className={`mx-px ${statusButton}`}>
        <svg width="16" height="16" viewBox="0 0 16 16" aria-hidden="true">
          <path d="M15 1L7 10q-3 1-4 4 4 1 6-2L15 3z" fill="#777" stroke="#666" />
          <circle cx="5.500" cy="5" r="4" fill="#f3d6d6" stroke="#d85050" strokeWidth="1.500" />
          <path d="M3 3l5 4" stroke="#d85050" strokeWidth="1.500" />
        </svg>
      </button>
      <Rule />
      <span className="flex w-[65px] shrink-0 items-center gap-1 pl-0.5">
        <Check id="render" label="Render" />
        <label htmlFor="render">Render</label>
      </span>
      <Rule />
      <span className="w-[67px] shrink-0 pl-0.5">EPSG:32749</span>
      <Rule />
      <button type="button" aria-label="Projection" className={`mx-0.5 ${statusButton}`}>
        <svg width="16" height="16" viewBox="0 0 16 16" fill="none" stroke="#333" aria-hidden="true">
          <circle cx="8" cy="8" r="6.500" fill="#999" strokeWidth="2" />
          <circle cx="8" cy="8" r="3.500" fill="#ccc" />
          <path d="M8 0v16M0 8h16" />
        </svg>
      </button>
      <Rule />
      <button type="button" aria-label="Warnings" className="mx-px flex h-[19px] w-5 shrink-0 items-center justify-center bg-white">
        <svg width="14" height="14" viewBox="0 0 14 14" aria-hidden="true">
          <path d="M7 1L13.500 13H.5z" fill="#ffee18" stroke="#b0a000" />
          <path d="M7 5v4M7 10.500v1.500" stroke="#222" strokeWidth="1.500" />
        </svg>
      </button>
      <Rule />
      <button type="button" aria-label="User" className={`mx-px ${statusButton}`}>
        <svg width="14" height="16" viewBox="0 0 14 16" fill="#aaa" stroke="#555" strokeWidth="1.300" aria-hidden="true">
          <path d="M1 14q0-5 3.500-5h5q3.500 0 3.500 5z" />
          <circle cx="7" cy="5.500" r="3.800" />
        </svg>
      </button>
      <svg width="9" height="9" className="absolute right-0 bottom-0" stroke="#8d8a83" aria-hidden="true"><path d="M0 9L9 0M4 9L9 4M7 9l2-2" /></svg>
      <Frame className="inset-y-0 right-0.5 left-0" />
      <Callout n="4" className="bottom-0.5 -left-1" />
    </footer>
  );
}

/* ---------- window ---------- */

const caption = "flex h-[14px] w-4 items-center justify-center border border-white border-r-[#404040] border-b-[#404040] bg-[#d4d0c8]";
const menus = ["File", "Edit", "View", "Layer", "Settings", "Plugins", "Vector", "Raster", "Database", "CadTools", "Analysis", "Web", "Help"];

export default function App() {
  return (
    <div className={`flex h-screen flex-col overflow-hidden border-t border-r-2 border-b-2 border-l border-[#d4d0c8] border-r-[#55534f] border-b-[#55534f] bg-[#d4d0c8] text-black ${UI}`}>
      <div className="flex min-h-0 flex-1 flex-col border-t border-l border-white pt-0.5 pr-0.5 pl-0.5">
        <header className="flex h-[18px] shrink-0 items-center bg-linear-to-r from-[#0a246a] to-[#a6caf0] pr-0.5 pl-1">
          <svg width="13" height="16" viewBox="0 0 13 16" aria-hidden="true">
            <ellipse cx="5.500" cy="7.500" rx="4" ry="5" fill="none" stroke="#e8e04a" strokeWidth="2.500" />
            <path d="M6 10l5 5" stroke="#e8e04a" strokeWidth="2.500" />
            <path d="M12 0Q5 2 5 10q6-2 7-10z" fill="#2a9a3a" />
          </svg>
          <h1 className="ml-0.5 flex-1 text-[11px] font-bold text-white">Quantum GIS 1.8.0-Lisboa</h1>
          <button type="button" aria-label="Minimize" className={caption}><svg width="8" height="8"><path d="M0 7h6" stroke="#000" strokeWidth="2" /></svg></button>
          <button type="button" aria-label="Maximize" className={caption}><svg width="10" height="9" fill="none" stroke="#000"><path d="M.5 1h9M.5 0v8.500h9V0" strokeWidth="1.500" /></svg></button>
          <button type="button" aria-label="Close" className={`ml-0.5 ${caption}`}><svg width="8" height="8"><path d="M1 1l6 6M7 1L1 7" stroke="#000" strokeWidth="1.600" /></svg></button>
        </header>

        <section className="relative mt-0.5 shrink-0">
          <nav className="flex h-[22px] items-center gap-3.5 border-b border-[#a19d95] pt-0.5 pl-[9px] text-[11px]">
            {menus.map((m) => (
              <button key={m} type="button">{m}</button>
            ))}
          </nav>
          <FileToolbar />
          <NavToolbar />
          <CadToolbar />
          <Frame className="inset-y-0 right-[3px] -left-px" />
          <Callout n="2" className="top-px right-1.5" />
        </section>

        <div className="flex min-h-0 flex-1">
          <LayerPanel />
          <div className="flex w-[5px] shrink-0 flex-col items-center justify-center overflow-hidden">
            <svg width="4" height="90" aria-hidden="true">
              {Array.from({ length: 22 }, (_, i) => (
                <rect key={i} x={i % 2 ? 2 : 0} y={i * 4} width="2" height="2" fill="#fff" />
              ))}
            </svg>
          </div>
          <MapCanvas />
        </div>
        <StatusBar />
      </div>
    </div>
  );
}
